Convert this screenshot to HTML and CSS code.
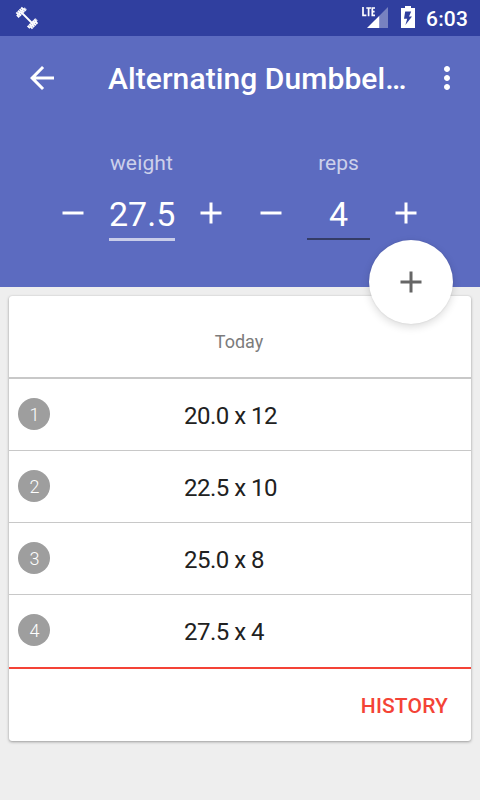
FILE: index.html
```html
<!DOCTYPE html>
<html lang="en">
<head>
<meta charset="utf-8">
<title>Alternating Dumbbell</title>
<link rel="stylesheet" href="styles.css">
</head>
<body>
<div class="statusbar">
  <svg class="dumbbell" width="24" height="24" viewBox="0 0 24 24"><g stroke="#fff" fill="none"><path d="M6 6L18 18" stroke-width="1.8"/><path d="M1.8 8.2L8.2 1.8M15.8 22.2L22.2 15.8" stroke-width="3.2" stroke-dasharray="1.9 .4"/><path d="M2.4 10.8L10.8 2.4M13.2 21.6L21.6 13.2" stroke-width="3.4" stroke-dasharray="2 .3"/></g></svg>
  <svg class="signal" width="28" height="24" viewBox="0 0 28 24"><path d="M26 1V22H17.3V9.7Z" fill="#fff" opacity=".35"/><path d="M17.3 9.7V22H5Z" fill="#fff"/><path d="M1 1V9.3H4.4M4.3 2H9M6.6 2V10.2M13 2H10.3V9.3H13M10.3 5.7H12.6" stroke="#fff" stroke-width="1.7" fill="none"/></svg>
  <svg class="battery" width="14" height="22" viewBox="0 0 14 22"><path d="M4 0H10V2H14V22H0V2H4ZM10.2 5.5H4.2L3 12.8H6.2L4.4 19L11 10.6H8Z" fill="#fff" fill-rule="evenodd"/></svg>
  <span class="clock">6:03</span>
</div>
<header class="header">
  <div class="toolbar">
    <svg class="back" width="36" height="36" viewBox="0 0 24 24"><path d="M20 11H7.83l5.59-5.59L12 4l-8 8 8 8 1.41-1.41L7.83 13H20v-2z" fill="#fff"/></svg>
    <h1 class="title">Alternating Dumbbel…</h1>
    <svg class="more" width="36" height="36" viewBox="0 0 24 24"><path d="M12 8c1.1 0 2-.9 2-2s-.9-2-2-2-2 .9-2 2 .9 2 2 2zm0 2c-1.1 0-2 .9-2 2s.9 2 2 2 2-.9 2-2-.9-2-2-2zm0 6c-1.1 0-2 .9-2 2s.9 2 2 2 2-.9 2-2-.9-2-2-2z" fill="#fff"/></svg>
  </div>
  <div class="inputs">
    <div class="field">
      <div class="label label-weight">weight</div>
      <div class="stepper">
        <svg class="step" viewBox="0 0 24 24"><path d="M19 13H5v-2h14v2z"/></svg>
        <div class="value value-weight">27.5</div>
        <svg class="step" viewBox="0 0 24 24"><path d="M19 13h-6v6h-2v-6H5v-2h6V5h2v6h6v2z"/></svg>
      </div>
    </div>
    <div class="field">
      <div class="label">reps</div>
      <div class="stepper">
        <svg class="step" viewBox="0 0 24 24"><path d="M19 13H5v-2h14v2z"/></svg>
        <div class="value value-reps">4</div>
        <svg class="step" viewBox="0 0 24 24"><path d="M19 13h-6v6h-2v-6H5v-2h6V5h2v6h6v2z"/></svg>
      </div>
    </div>
  </div>
  <div class="fab"><svg width="36" height="36" viewBox="0 0 24 24"><path d="M19 13h-6v6h-2v-6H5v-2h6V5h2v6h6v2z" fill="#666"/></svg></div>
</header>
<main class="card">
  <div class="day">Today</div>
  <div class="row"><span class="badge">1</span><span class="set">20.0 x 12</span></div>
  <div class="row"><span class="badge">2</span><span class="set">22.5 x 10</span></div>
  <div class="row"><span class="badge">3</span><span class="set">25.0 x 8</span></div>
  <div class="row row-last"><span class="badge">4</span><span class="set">27.5 x 4</span></div>
  <div class="actions"><span class="history">HISTORY</span></div>
</main>
</body>
</html>
```
FILE: styles.css
```css
* { box-sizing: border-box; }
body {
  margin: 0;
  width: 480px;
  height: 800px;
  overflow: hidden;
  background: #eeeeee;
  font-family: Roboto, sans-serif;
}
.statusbar {
  display: flex;
  height: 36px;
  padding: 6px 12px 0 15px;
  background: #303f9f;
  color: #fff;
}
.signal { margin-left: auto; }
.battery { margin-left: 11px; }
.clock {
  width: 42px;
  margin-left: 11px;
  font-size: 21px;
  font-weight: 500;
  line-height: 27px;
  letter-spacing: .2px;
  white-space: nowrap;
}
.header {
  position: relative;
  height: 251px;
  background: #5c6bc0;
  color: #fff;
}
.toolbar {
  display: flex;
  align-items: center;
  height: 84px;
  padding: 0 15px 0 24px;
}
.title {
  margin: 0 0 0 48px;
  padding-top: 2px;
  font-size: 30px;
  font-weight: 500;
  line-height: 36px;
  letter-spacing: .08px;
  white-space: nowrap;
}
.more { margin-left: auto; }
.inputs {
  display: flex;
  gap: 24px;
  padding: 28px 0 0 55px;
}
.label {
  height: 30px;
  color: rgba(255, 255, 255, .7);
  font-size: 21px;
  line-height: 30px;
  text-align: center;
}
.label-weight {
  padding-right: 1px;
  letter-spacing: .15px;
}
.stepper {
  display: flex;
  gap: 18px;
  padding-top: 17px;
}
.step { width: 36px; height: 36px; fill: #fff; }
.value {
  height: 46px;
  font-size: 34px;
  line-height: 38px;
  text-align: center;
}
.value-weight { width: 66px; border-bottom: 3px solid #c9cde9; }
.value-reps { width: 63px; height: 45px; border-bottom: 2px solid #343c66; }
.fab {
  position: absolute;
  right: 27px;
  bottom: -37px;
  display: flex;
  align-items: center;
  justify-content: center;
  width: 84px;
  height: 84px;
  border-radius: 50%;
  background: #fff;
  box-shadow: 0 3px 9px rgba(0, 0, 0, .14), 0 0 2px rgba(0, 0, 0, .1);
}
.card {
  margin: 9px 9px 0;
  height: 445px;
  border-radius: 3px;
  background: #fff;
  box-shadow: 0 1px 3px rgba(0, 0, 0, .35), 0 0 1px rgba(0, 0, 0, .15);
}
.day {
  height: 83px;
  padding: 10px 2px 0 0;
  border-bottom: 2px solid #c8c8c8;
  color: #7c7c7c;
  font-size: 18px;
  line-height: 72px;
  text-align: center;
}
.row {
  display: flex;
  align-items: flex-start;
  height: 72px;
  padding: 19px 0 0 9px;
  border-bottom: 1px solid #c8c8c8;
}
.row-last { height: 74px; border-bottom: 2px solid #f44336; }
.badge {
  width: 32px;
  height: 32px;
  padding-left: 1px;
  border-radius: 50%;
  background: #9e9e9e;
  color: #fff;
  font-size: 18px;
  font-weight: 300;
  line-height: 33px;
  text-align: center;
}
.set {
  margin-left: 134px;
  color: #212121;
  font-size: 24px;
  line-height: 36px;
  letter-spacing: -.5px;
  white-space: nowrap;
}
.actions {
  display: flex;
  align-items: center;
  justify-content: flex-end;
  height: 72px;
  padding: 2px 23px 0 0;
}
.history {
  color: #f44336;
  font-size: 21px;
  font-weight: 500;
  letter-spacing: .15px;
}
```
